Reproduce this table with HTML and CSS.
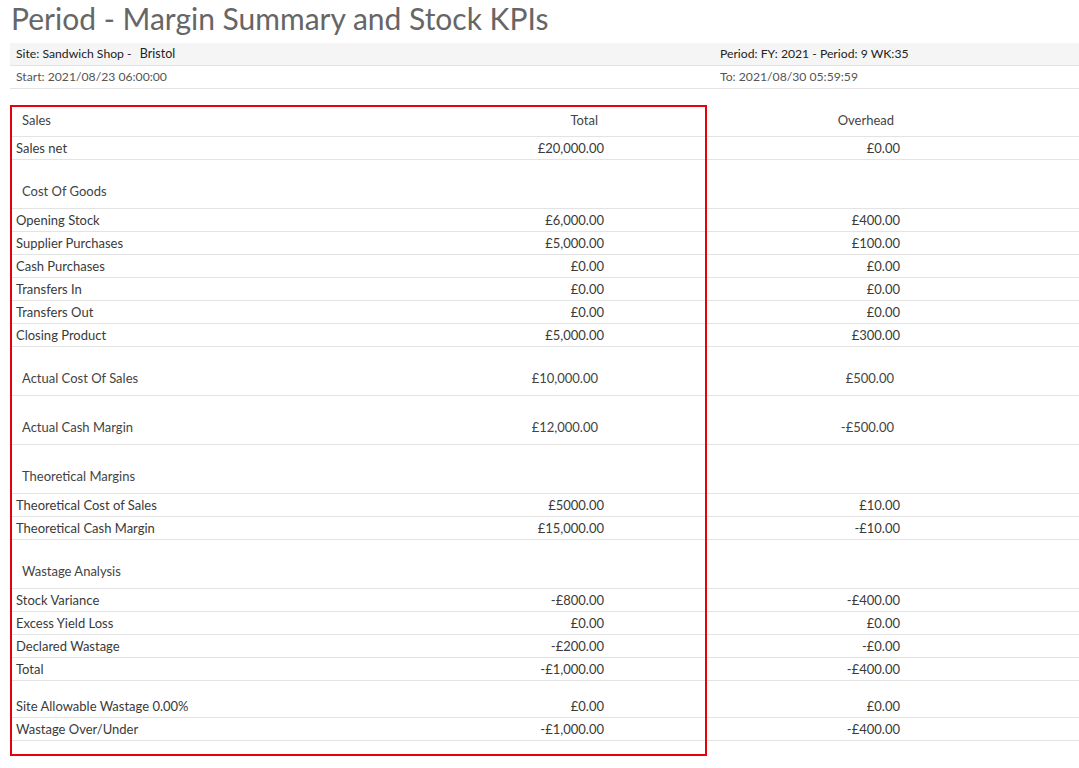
FILE: index.html
```html
<!DOCTYPE html>
<html>
<head>
<meta charset="utf-8">
<link rel="stylesheet" href="styles.css">
</head>
<body>
<h1 class="title">Period - Margin Summary and Stock KPIs</h1>
<table class="info">
  <tr class="info-top"><td class="info-left">Site: Sandwich Shop - &nbsp;<span class="city">Bristol</span></td><td>Period: FY: 2021 - Period: 9 WK:35</td></tr>
  <tr class="info-bottom"><td class="info-left">Start: 2021/08/23 06:00:00</td><td>To: 2021/08/30 05:59:59</td></tr>
</table>
<div class="report">
  <div class="highlight"></div>
  <table class="kpi">
    <colgroup><col class="c-label"><col class="c-total"><col class="c-over"><col></colgroup>
    <tr class="head"><td class="sec">Sales</td><td class="num sec">Total</td><td class="num sec">Overhead</td><td></td></tr>
    <tr><td>Sales net</td><td class="num">£20,000.00</td><td class="num">£0.00</td><td></td></tr>
    <tr class="section"><td class="sec">Cost Of Goods</td><td></td><td></td><td></td></tr>
    <tr><td>Opening Stock</td><td class="num">£6,000.00</td><td class="num">£400.00</td><td></td></tr>
    <tr><td>Supplier Purchases</td><td class="num">£5,000.00</td><td class="num">£100.00</td><td></td></tr>
    <tr><td>Cash Purchases</td><td class="num">£0.00</td><td class="num">£0.00</td><td></td></tr>
    <tr><td>Transfers In</td><td class="num">£0.00</td><td class="num">£0.00</td><td></td></tr>
    <tr><td>Transfers Out</td><td class="num">£0.00</td><td class="num">£0.00</td><td></td></tr>
    <tr><td>Closing Product</td><td class="num">£5,000.00</td><td class="num">£300.00</td><td></td></tr>
    <tr class="section"><td class="sec">Actual Cost Of Sales</td><td class="num sec">£10,000.00</td><td class="num sec">£500.00</td><td></td></tr>
    <tr class="section"><td class="sec">Actual Cash Margin</td><td class="num sec">£12,000.00</td><td class="num sec">-£500.00</td><td></td></tr>
    <tr class="section"><td class="sec">Theoretical Margins</td><td></td><td></td><td></td></tr>
    <tr><td>Theoretical Cost of Sales</td><td class="num">£5000.00</td><td class="num">£10.00</td><td></td></tr>
    <tr><td>Theoretical Cash Margin</td><td class="num">£15,000.00</td><td class="num">-£10.00</td><td></td></tr>
    <tr class="section"><td class="sec">Wastage Analysis</td><td></td><td></td><td></td></tr>
    <tr><td>Stock Variance</td><td class="num">-£800.00</td><td class="num">-£400.00</td><td></td></tr>
    <tr><td>Excess Yield Loss</td><td class="num">£0.00</td><td class="num">£0.00</td><td></td></tr>
    <tr><td>Declared Wastage</td><td class="num">-£200.00</td><td class="num">-£0.00</td><td></td></tr>
    <tr><td>Total</td><td class="num">-£1,000.00</td><td class="num">-£400.00</td><td></td></tr>
    <tr class="spaced"><td>Site Allowable Wastage 0.00%</td><td class="num">£0.00</td><td class="num">£0.00</td><td></td></tr>
    <tr><td>Wastage Over/Under</td><td class="num">-£1,000.00</td><td class="num">-£400.00</td><td></td></tr>
  </table>
</div>
</body>
</html>
```
FILE: styles.css
```css
html, body {
  margin: 0;
  padding: 0;
  background: #fff;
}
body {
  font-family: Lato, "Open Sans", sans-serif;
  font-size: 13px;
  color: #333;
}
.title {
  margin: 0;
  padding: 0 0 0 11px;
  height: 43px;
  font-size: 30px;
  font-weight: 400;
  color: #666;
  line-height: 36px;
  box-sizing: border-box;
}
.info {
  width: calc(100% - 10px);
  margin-left: 10px;
  border-collapse: collapse;
  font-size: 12.2px;
}
.info td {
  padding: 0 6px;
  height: 22px;
  line-height: 22px;
  border-bottom: 1px solid #e3e3e3;
}
.info-left { width: 692px; }
.info-top td {
  background: #f5f5f5;
  color: #222;
}
.info-bottom td { color: #555; }
.city { font-size: 12.5px; margin-left: 2px; }
.report {
  position: relative;
  margin-top: 16px;
  margin-left: 10px;
  padding-bottom: 24px;
}
.highlight {
  position: absolute;
  left: 0;
  top: 0;
  width: 697px;
  height: 651px;
  border: 2px solid #e8000b;
  box-sizing: border-box;
  pointer-events: none;
}
.kpi {
  width: 100%;
  border-collapse: collapse;
  table-layout: fixed;
}
.c-label { width: 400px; }
.c-total { width: 200px; }
.c-over { width: 296px; }
.kpi td {
  padding: 0 6px;
  height: 22px;
  line-height: 22px;
  border-bottom: 1px solid #e3e3e3;
  white-space: nowrap;
  color: #3a3a3a;
}
.kpi td.num { text-align: right; }
.kpi td.sec { padding-left: 12px; padding-right: 12px; color: #444; }
.kpi tr.head td {
  padding-top: 4px;
  padding-bottom: 5px;
}
.kpi tr.section td {
  padding-top: 20px;
  padding-bottom: 6px;
}
.kpi tr.spaced td {
  padding-top: 14px;
}
```
